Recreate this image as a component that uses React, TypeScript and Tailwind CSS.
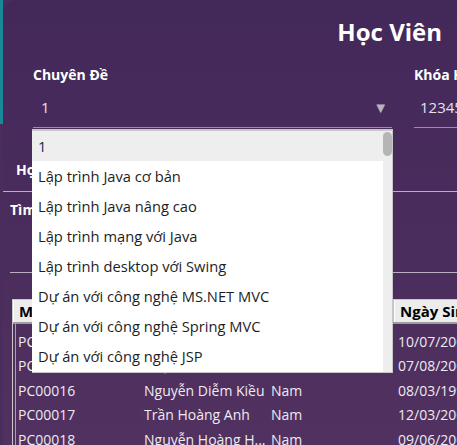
import React from "react";

const items = [
  "1",
  "Lập trình Java cơ bản",
  "Lập trình Java nâng cao",
  "Lập trình mạng với Java",
  "Lập trình desktop với Swing",
  "Dự án với công nghệ MS.NET MVC",
  "Dự án với công nghệ Spring MVC",
  "Dự án với công nghệ JSP",
];

const rows = [
  ["PC00014", "Lê Văn Tâm", "Nam", "10/07/2003"],
  ["PC00015", "Phạm Minh Đức", "Nam", "07/08/2002"],
  ["PC00016", "Nguyễn Diễm Kiều", "Nam", "08/03/1999"],
  ["PC00017", "Trần Hoàng Anh", "Nam", "12/03/2001"],
  ["PC00018", "Nguyễn Hoàng H...", "Nam", "09/06/2002"],
];

export default function App() {
  return (
    <div
      className="relative w-[457px] h-[445px] overflow-hidden bg-[#4a2d5c] text-[14px]"
      style={{ fontFamily: '"Open Sans", "Noto Sans", sans-serif' }}
    >
      {/* window behind */}
      <div className="absolute left-0 top-0 w-[3px] h-[124px] bg-[#19899a]" />

      <div className="ml-[3px] h-full rounded-tl-[12px] bg-gradient-to-b from-[#43285a] to-[#51315f] overflow-hidden">
        {/* title */}
        <div className="flex justify-end pr-[15px] pt-[16px] h-[56px]">
          <h1 className="text-[24px] font-bold text-white leading-[32px]">Học Viên</h1>
        </div>

        {/* fields */}
        <div className="flex pl-[30px] gap-[22px]">
          <div className="w-[359px] shrink-0">
            <div className="font-bold text-white leading-[22px] mt-[8px]">Chuyên Đề</div>
            <div className="flex items-center justify-between h-[40px] pl-[8px] pr-[4px] mt-[2px] text-[#e6e2ea] text-[15px] border-b border-[#9a8ea6]">
              <span>1</span>
              <span className="text-[#b8b3bd] text-[15px]">▼</span>
            </div>
          </div>
          <div className="flex-1 min-w-0">
            <div className="font-bold text-white leading-[22px] mt-[8px] whitespace-nowrap">Khóa Học</div>
            <div className="flex items-center h-[40px] pl-[6px] mt-[2px] text-[#e6e2ea] text-[15px] border-b border-[#9a8ea6] whitespace-nowrap">
              123456
            </div>
          </div>
        </div>

        {/* tab */}
        <div className="mt-[20px] border-b border-[#b9afc2] h-[44px] pl-[13px] flex items-center">
          <span className="font-bold text-white">Học Viên</span>
        </div>

        {/* search */}
        <div className="ml-[7px] h-[81px] border-b border-[#b9afc2] pt-[7px]">
          <span className="font-bold text-white">Tìm kiếm</span>
        </div>

        {/* table */}
        <div className="ml-[9px] mt-[26px] border-l border-t border-[#c9c9c9]">
          <div className="grid grid-cols-[127px_127px_127px_127px] h-[24px] bg-[#ececec] text-black font-bold text-[15px] border-b-2 border-[#9f9aa3]">
            {["Mã HV", "Họ và Tên", "Giới Tính", "Ngày Sinh"].map((h) => (
              <div key={h} className="px-[5px] leading-[22px] border-r border-[#c4c4c4] border-l border-l-white whitespace-nowrap overflow-hidden">
                {h}
              </div>
            ))}
          </div>
          <div className="ml-[2px] border-l border-[#a99fb2] pt-[5px]">
            {rows.map((r) => (
              <div key={r[0]} className="grid grid-cols-[126px_127px_127px_127px] h-[24.5px] items-center text-[14px] text-[#eeeaf2]">
                {r.map((c, i) => (
                  <div key={i} className="px-[2px] whitespace-nowrap overflow-hidden">
                    {c}
                  </div>
                ))}
              </div>
            ))}
          </div>
        </div>
      </div>

      {/* open dropdown */}
      <div className="absolute left-[32px] top-[129px] w-[361px] h-[244px] bg-white border-t-2 border-r border-b border-[#c8c8c8] flex">
        <div className="flex-1">
          {items.map((t, i) => (
            <div
              key={t}
              className={
                "h-[30px] pl-[6px] flex items-center whitespace-nowrap text-[14.7px] " +
                (i === 0 ? "bg-[#eeeeee] text-[#26264a]" : "text-[#1e1e1e]")
              }
            >
              {t}
            </div>
          ))}
        </div>
        <div className="w-[9px] bg-[#eeeeee] pt-[1px]">
          <div className="h-[24px] rounded-full bg-[#b5b5b5]" />
        </div>
      </div>
    </div>
  );
}
